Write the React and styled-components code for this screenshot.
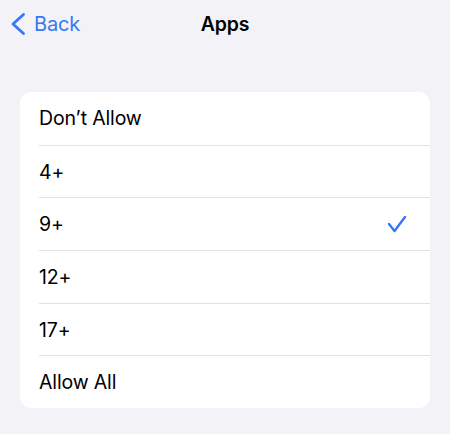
import React from "react";
import styled, { createGlobalStyle } from "styled-components";

const Global = createGlobalStyle`
  html, body { margin: 0; padding: 0; background: #f2f2f7; }
  body { font-family: Inter, "Noto Sans", sans-serif; -webkit-font-smoothing: antialiased; }
`;

const Page = styled.div`
  width: 450px;
  height: 434px;
  background: #f2f2f7;
  display: flex;
  flex-direction: column;
`;

const NavBar = styled.div`
  height: 48px;
  display: grid;
  grid-template-columns: 1fr auto 1fr;
  align-items: center;
`;

const BackButton = styled.div`
  display: flex;
  align-items: center;
  gap: 8px;
  padding-left: 10px;
  color: #3478f6;
  font-size: 20px;
  letter-spacing: -0.2px;
`;

const Title = styled.div`
  font-size: 19.5px;
  font-weight: 600;
  color: #000;
  letter-spacing: -0.2px;
`;

const Card = styled.div`
  margin: 44px 20px 0 20px;
  background: #fff;
  border-radius: 11px;
  overflow: hidden;
`;

const Row = styled.div`
  height: 52.7px;
  display: flex;
  align-items: center;
  justify-content: space-between;
  margin-left: 19px;
  padding-right: 23px;
  font-size: 19.5px;
  color: #000;
  letter-spacing: -0.15px;
  box-sizing: border-box;
  border-top: ${(p) => (p.$first ? "none" : "1px solid #e1e1e4")};
`;

const Check = () => (
  <svg width="20" height="18" viewBox="0 0 20 18">
    <path d="M2 9 L7.5 16 L18 2" fill="none" stroke="#3478f6" strokeWidth="2.4" strokeLinecap="round" strokeLinejoin="round" />
  </svg>
);

const Chevron = () => (
  <svg width="16" height="24" viewBox="0 0 16 24">
    <path d="M13.5 2.5 L3 12 L13.5 21.5" fill="none" stroke="#3478f6" strokeWidth="2.8" strokeLinecap="round" strokeLinejoin="round" />
  </svg>
);

const items = ["Don’t Allow", "4+", "9+", "12+", "17+", "Allow All"];

export default function App() {
  return (
    <Page>
      <Global />
      <NavBar>
        <BackButton>
          <Chevron />
          <span>Back</span>
        </BackButton>
        <Title>Apps</Title>
        <div />
      </NavBar>
      <Card>
        {items.map((it, i) => (
          <Row key={it} $first={i === 0}>
            <span>{it}</span>
            {it === "9+" && <Check />}
          </Row>
        ))}
      </Card>
    </Page>
  );
}
